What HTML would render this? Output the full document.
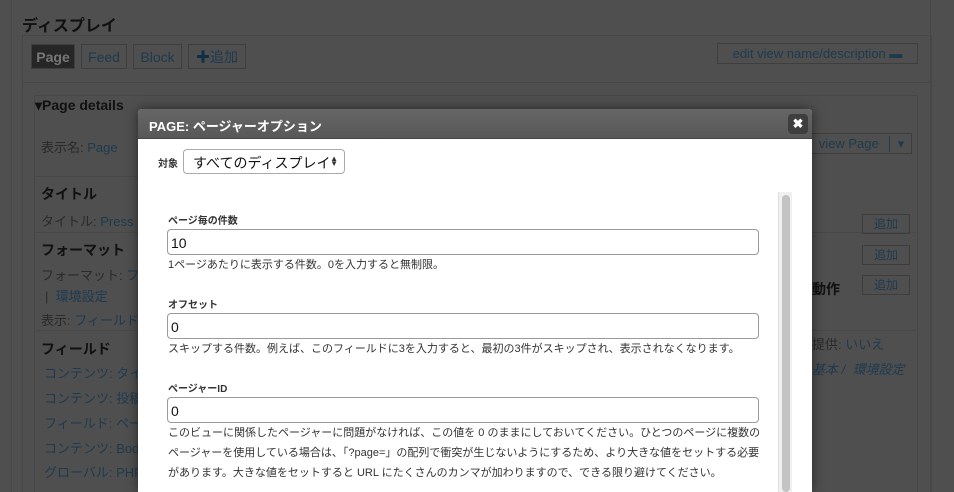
<!DOCTYPE html>
<html style="background:#4f4f4f;width:954px;height:492px;overflow:hidden"><head><meta charset="utf-8"><style>
*{box-sizing:border-box;margin:0;padding:0}
body{width:954px;height:492px;overflow:hidden;background:#4f4f4f;font-family:"Liberation Sans","Noto Sans CJK JP",sans-serif;position:relative;color:#111}
.a{position:absolute}
.ln{position:absolute;background:#474747}
.lk{color:#1e3a4f}
.g{color:#2a2a2a}
.btn{position:absolute;border:1px solid #3e3e3e;color:#1e3a4f;font-size:14px;text-align:center}
.add{position:absolute;border:1px solid #3d3d3d;color:#1e3a4f;font-size:12px;width:48px;height:20px;line-height:18px;text-align:center;left:862px}
.t{position:absolute;font-size:13px;white-space:nowrap}
.h{position:absolute;font-size:14px;font-weight:bold;color:#111}
.row{position:absolute;left:34px;width:882px;height:1px;background:#484848}
.lab{position:absolute;left:168px;font-size:10px;font-weight:bold;color:#333}
.inp{position:absolute;left:167px;width:592px;height:26px;border:1px solid #9a9a9a;border-radius:4px;font-size:14px;padding:5px 3px;color:#111}
.d{position:absolute;left:168px;font-size:11px;color:#333;line-height:20px;width:594px}
</style></head><body>
<div class="ln" style="left:11px;top:0;width:1px;height:492px"></div>
<div class="ln" style="left:930px;top:0;width:1px;height:492px"></div>
<div class="a" style="left:22px;top:12px;font-size:16px;font-weight:bold">ディスプレイ</div>
<div class="a" style="left:22px;top:35px;width:910px;height:457px;border:1px solid #474747;border-bottom:none"></div>
<div class="ln" style="left:22px;top:82px;width:910px;height:1px"></div>
<div class="btn" style="left:31px;top:44px;width:44px;height:25px;line-height:24px;background:#262626;color:#777;font-weight:bold">Page</div>
<div class="btn" style="left:81px;top:44px;width:46px;height:25px;line-height:24px">Feed</div>
<div class="btn" style="left:133px;top:44px;width:49px;height:25px;line-height:24px">Block</div>
<div class="btn" style="left:188px;top:44px;width:58px;height:25px;line-height:24px"><b style="color:#0d2f47">✚</b>追加</div>
<div class="btn" style="left:717px;top:43px;width:201px;height:21px;line-height:20px;font-size:13px">edit view name/description <b>▬</b></div>
<div class="a" style="left:34px;top:95px;width:884px;height:397px;border:1px solid #474747;border-bottom:none"></div>
<div class="a" style="left:35px;top:97px;font-size:14px;font-weight:bold">▾Page details</div>
<div class="t g" style="left:41px;top:137px">表示名: <span class="lk">Page</span></div>
<div class="btn" style="left:812px;top:133px;width:100px;height:21px;line-height:20px;font-size:13px;border-left:none">view Page &nbsp;│ ▾</div>
<div class="row" style="top:176px;width:740px"></div>
<div class="h" style="left:41px;top:184px">タイトル</div>
<div class="t g" style="left:41px;top:211px">タイトル: <span class="lk">Press</span></div>
<div class="row" style="top:232px"></div>
<div class="h" style="left:41px;top:240px">フォーマット</div>
<div class="t g" style="left:41px;top:265px">フォーマット: <span class="lk">フ</span></div>
<div class="t g" style="left:45px;top:286px">| &nbsp;<span class="lk">環境設定</span></div>
<div class="t g" style="left:41px;top:310px">表示: <span class="lk">フィールド</span></div>
<div class="row" style="top:330px"></div>
<div class="h" style="left:41px;top:339px">フィールド</div>
<div class="t lk" style="left:44px;top:363px">コンテンツ: タイ</div>
<div class="t lk" style="left:44px;top:388px">コンテンツ: 投稿</div>
<div class="t lk" style="left:44px;top:413px">フィールド: ペー</div>
<div class="t lk" style="left:44px;top:438px">コンテンツ: Body</div>
<div class="t lk" style="left:44px;top:462px">グローバル: PHP</div>
<div class="add" style="top:214px">追加</div>
<div class="add" style="top:245px">追加</div>
<div class="add" style="top:275px">追加</div>
<div class="h" style="left:812px;top:279px">動作</div>
<div class="t g" style="left:812px;top:334px">提供: <span class="lk">いいえ</span></div>
<div class="t lk" style="left:812px;top:359px;font-style:italic">基本 / &nbsp;環境設定</div>

<div class="a" style="left:138px;top:109px;width:674px;height:383px;background:#fff;box-shadow:0 0 12px rgba(0,0,0,.5);border-radius:4px 4px 0 0">
<div style="height:30px;background:linear-gradient(#666,#585858);border-radius:4px 4px 0 0;border-bottom:1px solid #444;color:#fff;font-weight:bold;font-size:13px;padding:7px 11px">PAGE: ページャーオプション</div>
<div class="a" style="left:650px;top:5px;width:20px;height:20px;background:#3e3e3e;border-radius:4px;color:#fff;font-size:13px;font-weight:bold;text-align:center;line-height:20px">✖</div>
</div>
<div class="a" style="left:158px;top:155px;font-size:10px;font-weight:bold;color:#333">対象</div>
<div class="a" style="left:183px;top:149px;width:162px;height:25px;border:1px solid #aaa;border-radius:4px;font-size:14px;padding:3px 9px;color:#111;white-space:nowrap;overflow:hidden">すべてのディスプレイ<span style="font-size:8px;position:absolute;right:6px;top:6px;line-height:5px;color:#333;background:#fff">▲<br>▼</span></div>
<div class="a" style="left:778px;top:192px;width:14px;height:300px;background:#f0f0f0;border-left:1px solid #e0e0e0"></div>
<div class="a" style="left:782px;top:195px;width:8px;height:297px;background:#c3c3c3;border-radius:4px"></div>
<div class="lab" style="top:212px">ページ毎の件数</div>
<div class="inp" style="top:229px">10</div>
<div class="d" style="top:255px">1ページあたりに表示する件数。0を入力すると無制限。</div>
<div class="lab" style="top:296px">オフセット</div>
<div class="inp" style="top:313px">0</div>
<div class="d" style="top:339px">スキップする件数。例えば、このフィールドに3を入力すると、最初の3件がスキップされ、表示されなくなります。</div>
<div class="lab" style="top:380px">ページャーID</div>
<div class="inp" style="top:397px">0</div>
<div class="d" style="top:423px">このビューに関係したページャーに問題がなければ、この値を 0 のままにしておいてください。ひとつのページに複数のページャーを使用している場合は、「?page=」の配列で衝突が生じないようにするため、より大きな値をセットする必要があります。大きな値をセットすると URL にたくさんのカンマが加わりますので、できる限り避けてください。</div>
</body></html>
